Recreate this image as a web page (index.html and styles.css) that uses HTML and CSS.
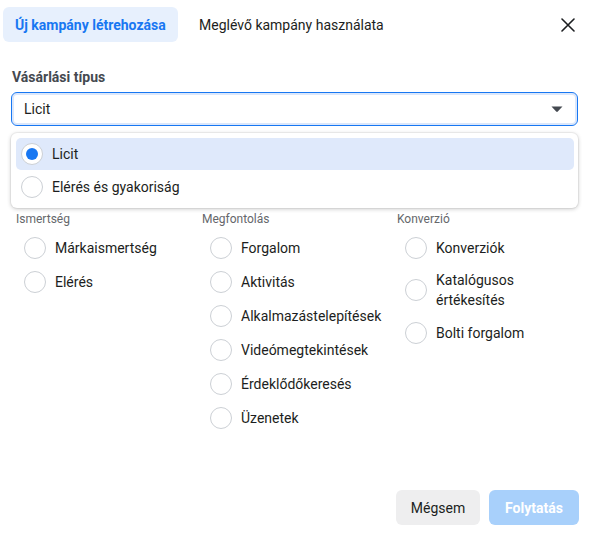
FILE: index.html
```html
<!DOCTYPE html>
<html lang="hu">
<head>
<meta charset="utf-8">
<link rel="stylesheet" href="styles.css">
</head>
<body>
<div class="dialog">
  <div class="header">
    <div class="tabs">
      <div class="tab active">Új kampány létrehozása</div>
      <div class="tab">Meglévő kampány használata</div>
    </div>
    <button class="close" aria-label="Bezárás">
      <svg width="14" height="14" viewBox="0 0 14 14"><path d="M1 1L13 13M13 1L1 13" stroke="#1c1e21" stroke-width="1.6" stroke-linecap="round"/></svg>
    </button>
  </div>

  <div class="section">
    <div class="label">Vásárlási típus</div>
    <div class="select">
      <span>Licit</span>
      <svg class="caret" width="12" height="8" viewBox="0 0 12 8"><path d="M0.5 1.5h11L6.8 6.6a1.1 1.1 0 0 1-1.6 0z" fill="#444950"/></svg>
    </div>
    <div class="menu">
      <div class="option selected"><span class="radio on"></span><span>Licit</span></div>
      <div class="option"><span class="radio"></span><span>Elérés és gyakoriság</span></div>
    </div>
  </div>

  <div class="columns">
    <div class="col">
      <div class="col-title">Ismertség</div>
      <div class="item"><span class="radio"></span><span>Márkaismertség</span></div>
      <div class="item"><span class="radio"></span><span>Elérés</span></div>
    </div>
    <div class="col">
      <div class="col-title">Megfontolás</div>
      <div class="item"><span class="radio"></span><span>Forgalom</span></div>
      <div class="item"><span class="radio"></span><span>Aktivitás</span></div>
      <div class="item"><span class="radio"></span><span>Alkalmazástelepítések</span></div>
      <div class="item"><span class="radio"></span><span>Videómegtekintések</span></div>
      <div class="item"><span class="radio"></span><span>Érdeklődőkeresés</span></div>
      <div class="item"><span class="radio"></span><span>Üzenetek</span></div>
    </div>
    <div class="col">
      <div class="col-title">Konverzió</div>
      <div class="item"><span class="radio"></span><span>Konverziók</span></div>
      <div class="item"><span class="radio"></span><span>Katalógusos<br>értékesítés</span></div>
      <div class="item"><span class="radio"></span><span>Bolti forgalom</span></div>
    </div>
  </div>

  <div class="footer">
    <button class="btn secondary">Mégsem</button>
    <button class="btn primary">Folytatás</button>
  </div>
</div>
</body>
</html>
```
FILE: styles.css
```css
* { box-sizing: border-box; }
html, body { margin: 0; padding: 0; background: #fff; }
body {
  font-family: Roboto, "Liberation Sans", Arial, sans-serif;
  font-size: 14px;
  color: #1c1e21;
  width: 592px;
  height: 533px;
  overflow: hidden;
}
.dialog {
  display: flex;
  flex-direction: column;
  height: 533px;
}
.header {
  display: flex;
  align-items: center;
  justify-content: space-between;
  padding: 7px 14px 0 3px;
}
.tabs { display: flex; gap: 9px; }
.tab {
  height: 35px;
  padding: 0 12px;
  display: flex;
  align-items: center;
  border-radius: 6px;
  color: #1c1e21;
}
.tab.active {
  background: #e7f0fd;
  color: #1877f2;
  font-weight: 700;
  width: 175px;
}
.close {
  border: 0;
  background: none;
  padding: 0;
  width: 20px;
  height: 20px;
  display: flex;
  align-items: center;
  justify-content: center;
}
.section {
  padding: 27px 14px 0 11px;
}
.label {
  font-weight: 700;
  color: #444950;
  padding-left: 1px;
  margin-bottom: 6px;
  line-height: 17px;
}
.select {
  height: 34px;
  border: 1px solid #1877f2;
  box-shadow: inset 0 0 0 2px #dbe7fb;
  border-radius: 6px;
  display: flex;
  align-items: center;
  justify-content: space-between;
  padding: 0 14px 0 12px;
}
.menu {
  margin-top: 7px;
  background: #fff;
  border-radius: 6px;
  box-shadow: 0 1px 4px rgba(0,0,0,0.22), 0 0 0 1px rgba(0,0,0,0.04);
  padding: 5px 4px 5px 5px;
}
.option {
  height: 32px;
  display: flex;
  align-items: center;
  gap: 9px;
  padding-left: 5px;
  border-radius: 5px;
}
.option + .option { margin-top: 1px; }
.option.selected { background: #dfe9fb; }
.radio {
  width: 22px;
  height: 22px;
  border-radius: 50%;
  border: 1px solid #ccd0d5;
  background: #fff;
  flex: none;
  display: flex;
  align-items: center;
  justify-content: center;
}
.radio.on::after {
  content: "";
  width: 12px;
  height: 12px;
  border-radius: 50%;
  background: #1877f2;
}
.columns {
  display: grid;
  grid-template-columns: 186px 195px 1fr;
  padding: 3px 0 0 16px;
}
.col-title {
  font-size: 12px;
  color: #65676b;
  line-height: 16px;
  margin-bottom: 3px;
}
.item {
  display: flex;
  align-items: center;
  gap: 9px;
  padding: 6px 0 5px 8px;
  min-height: 34px;
  line-height: 20px;
}
.footer {
  margin-top: auto;
  display: flex;
  justify-content: flex-end;
  gap: 9px;
  padding: 0 13px 8px 0;
}
.btn {
  font-family: inherit;
  font-size: 14px;
  height: 35px;
  border: 0;
  border-radius: 6px;
  padding: 0 14px;
}
.btn.secondary {
  background: #eeeeef;
  color: #1c1e21;
  width: 84px;
}
.btn.primary {
  background: #a8d0fb;
  color: #fff;
  font-weight: 700;
  width: 90px;
}
```
